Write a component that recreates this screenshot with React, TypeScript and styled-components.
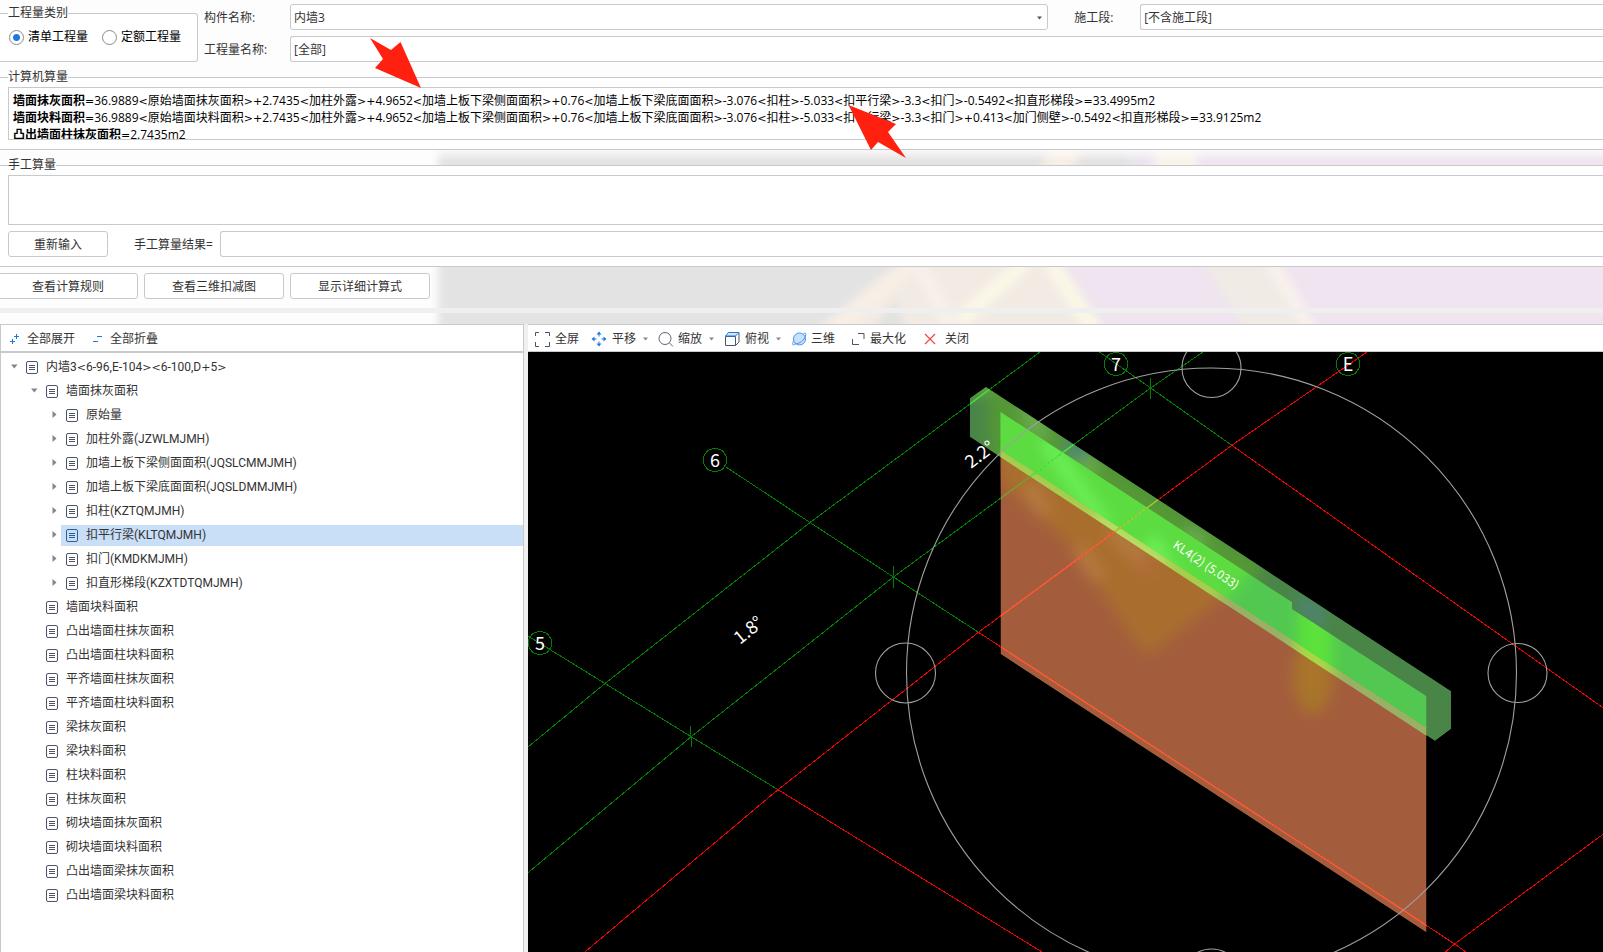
import React, { useState } from "react";
import styled, { createGlobalStyle } from "styled-components";

const LINE = "#c8c9cc";

const GlobalStyle = createGlobalStyle`
  *, *::before, *::after { box-sizing: border-box; }
  html, body { margin: 0; padding: 0; }
  body, button, input, select, textarea {
    font-family: "Open Sans", "Noto Sans CJK SC", sans-serif;
    font-size: 12px;
    line-height: 16px;
    color: #333;
  }
`;

const Page = styled.div`
  position: relative;
  display: flex;
  flex-direction: column;
  min-height: 100vh;
  overflow: hidden;
  background: #fdfdfd;
`;

const Backdrop = styled.svg`
  position: absolute;
  top: 149px;
  left: 0;
  width: 100%;
  height: 206px;
`;

const Content = styled.div`
  position: relative;
  flex: 1;
  display: flex;
  flex-direction: column;
`;

const TopRow = styled.div`
  display: flex;
  gap: 6px;
  height: 62px;
`;

const Group = styled.fieldset<{ $boxed?: boolean }>`
  min-width: 0;
  margin: 0;
  padding: 0 0 9px 8px;
  border: 1px solid ${LINE};
  border-left: 0;
  border-right-width: ${(p) => (p.$boxed ? "1px" : "0")};
  border-radius: ${(p) => (p.$boxed ? "0 3px 3px 0" : "0")};
  background: #fff;
`;

const KindGroup = styled(Group)`
  flex: 0 0 198px;
  margin-top: 5px;
`;

const Legend = styled.legend`
  padding: 0;
  height: 16px;
`;

const RadioRow = styled.div`
  display: flex;
  gap: 14px;
  padding: 8px 0 0 1px;
`;

const RadioLabel = styled.label`
  display: flex;
  align-items: center;
  gap: 4px;
  color: #000;
`;

const Radio = styled.input`
  appearance: none;
  width: 15px;
  height: 15px;
  margin: 0;
  border: 1px solid #8a8a8a;
  border-radius: 50%;
  background: #fff;
  &:checked {
    background: radial-gradient(circle, #1f78e0 0 3px, #fff 4px);
  }
`;

const Fields = styled.div`
  flex: 1;
  display: flex;
  flex-direction: column;
  gap: 6px;
  padding-top: 4px;
`;

const FieldRow = styled.div`
  display: flex;
  align-items: center;
`;

const FieldLabel = styled.label<{ $second?: boolean }>`
  flex: none;
  width: ${(p) => (p.$second ? "66px" : "86px")};
  margin-left: ${(p) => (p.$second ? "26px" : "0")};
  padding-top: 2px;
`;

const SelectBox = styled.div<{ $grow: number; $open?: boolean }>`
  position: relative;
  flex: ${(p) => p.$grow} 1 0;
  min-width: 0;
  height: 26px;
  border: 1px solid ${LINE};
  border-radius: ${(p) => (p.$open ? "3px 0 0 3px" : "3px")};
  border-right-width: ${(p) => (p.$open ? "0" : "1px")};
  background: #fff;
`;

const Select = styled.select`
  appearance: none;
  display: block;
  width: 100%;
  height: 24px;
  padding: 2px 3px 0;
  border: 0;
  background: transparent;
`;

const Caret = styled.svg`
  position: absolute;
  top: 11px;
  right: 5px;
  width: 5px;
  height: 4px;
  pointer-events: none;
`;

const CalcGroup = styled(Group)`
  margin-top: 7px;
`;

const CalcOutput = styled.div`
  height: 53px;
  margin-top: 2px;
  padding: 4px;
  overflow: hidden;
  border: 1px solid ${LINE};
  border-right: 0;
  background: #fff;
  color: #000;
  line-height: 17px;
  white-space: nowrap;
`;

const Operator = styled.span`
  font-family: "DejaVu Sans", sans-serif;
  font-size: 11px;
  line-height: 1;
`;

const ManualGroup = styled(Group)`
  margin-top: 7px;
`;

const ManualInput = styled.textarea`
  display: block;
  width: 100%;
  height: 50px;
  margin: 2px 0 6px;
  border: 1px solid ${LINE};
  border-right: 0;
  border-radius: 0;
  background: #fff;
  resize: none;
`;

const Button = styled.button<{ $wide?: boolean }>`
  flex: none;
  width: ${(p) => (p.$wide ? "140px" : "100px")};
  height: 26px;
  padding: 1px 0 0;
  border: 1px solid ${LINE};
  border-radius: 3px;
  background: #fff;
`;

const ResultLabel = styled.label`
  flex: none;
  width: 86px;
  margin-left: 26px;
  padding-top: 1px;
`;

const ResultInput = styled.input`
  flex: 1;
  min-width: 0;
  height: 26px;
  border: 1px solid ${LINE};
  border-right: 0;
  border-radius: 3px 0 0 3px;
  background: #fff;
`;

const Actions = styled.div`
  display: flex;
  gap: 6px;
  margin-left: -2px;
  padding: 6px 0 9px;
`;

const Splitter = styled.div`
  height: 5px;
  margin-bottom: 11px;
  background: #efefef;
`;

const Main = styled.main`
  flex: 1;
  display: grid;
  grid-template-columns: minmax(0, 524fr) minmax(0, 1075fr);
  gap: 4px;
  background: #f0f0f0;
`;

const Panel = styled.section`
  display: flex;
  flex-direction: column;
  min-width: 0;
`;

const TreePanel = styled(Panel)`
  border: 1px solid ${LINE};
  border-bottom: 0;
  background: #fff;
`;

const ViewPanel = styled(Panel)`
  border-top: 1px solid ${LINE};
  background: #fff;
`;

const Toolbar = styled.div<{ $gap: number; $thick?: boolean }>`
  display: flex;
  align-items: center;
  gap: ${(p) => p.$gap}px;
  height: ${(p) => (p.$thick ? "28px" : "27px")};
  padding-top: 2px;
  padding-left: ${(p) => (p.$thick ? "8px" : "6px")};
  border-bottom: ${(p) => (p.$thick ? "2px" : "1px")} solid ${LINE};
`;

const ToolButton = styled.button`
  display: flex;
  align-items: center;
  gap: 5px;
  height: 24px;
  padding: 0;
  border: 0;
  background: transparent;
  svg { display: block; overflow: visible; }
`;

const Tree = styled.ul`
  margin: 0;
  padding: 2px 0 0 6px;
  list-style: none;
  ul { margin: 0; padding: 0 0 0 20px; list-style: none; }
`;

const TreeRow = styled.div`
  display: flex;
  align-items: center;
  height: 24px;
`;

const Toggle = styled.button`
  display: flex;
  justify-content: center;
  flex: none;
  width: 14px;
  height: 14px;
  padding: 3px 0 0;
  border: 0;
  background: transparent;
`;

const ToggleSpace = styled.span`
  flex: none;
  width: 14px;
`;

const TreeLabel = styled.button<{ $selected: boolean }>`
  flex: 1;
  display: flex;
  align-items: center;
  gap: 8px;
  min-width: 0;
  height: 21px;
  padding: 0 0 0 5px;
  border: 0;
  background: ${(p) => (p.$selected ? "#c9dff8" : "transparent")};
  font-family: Roboto, "Noto Sans CJK SC", sans-serif;
  white-space: nowrap;
`;

const Canvas = styled.div`
  position: relative;
  flex: 1;
  min-height: 600px;
  background: #000;
`;

const Scene = styled.svg`
  position: absolute;
  inset: 0;
  width: 100%;
  height: 100%;
  font-family: "Noto Sans CJK SC", sans-serif;
`;

const Arrows = styled.svg`
  position: absolute;
  top: 36px;
  left: 368px;
  width: 540px;
  height: 124px;
  pointer-events: none;
`;

type Node = { text: string; children?: Node[]; closed?: boolean };

const tree: Node = {
  text: "内墙3<6-96,E-104><6-100,D+5>",
  children: [
    {
      text: "墙面抹灰面积",
      children: [
        "原始量",
        "加柱外露(JZWLMJMH)",
        "加墙上板下梁侧面面积(JQSLCMMJMH)",
        "加墙上板下梁底面面积(JQSLDMMJMH)",
        "扣柱(KZTQMJMH)",
        "扣平行梁(KLTQMJMH)",
        "扣门(KMDKMJMH)",
        "扣直形梯段(KZXTDTQMJMH)",
      ].map((text) => ({ text, closed: true })),
    },
    ...[
      "墙面块料面积",
      "凸出墙面柱抹灰面积",
      "凸出墙面柱块料面积",
      "平齐墙面柱抹灰面积",
      "平齐墙面柱块料面积",
      "梁抹灰面积",
      "梁块料面积",
      "柱块料面积",
      "柱抹灰面积",
      "砌块墙面抹灰面积",
      "砌块墙面块料面积",
      "凸出墙面梁抹灰面积",
      "凸出墙面梁块料面积",
    ].map((text) => ({ text })),
  ],
};

const formulas = [
  {
    name: "墙面抹灰面积",
    body: "=36.9889<原始墙面抹灰面积>+2.7435<加柱外露>+4.9652<加墙上板下梁侧面面积>+0.76<加墙上板下梁底面面积>-3.076<扣柱>-5.033<扣平行梁>-3.3<扣门>-0.5492<扣直形梯段>=33.4995m2",
  },
  {
    name: "墙面块料面积",
    body: "=36.9889<原始墙面块料面积>+2.7435<加柱外露>+4.9652<加墙上板下梁侧面面积>+0.76<加墙上板下梁底面面积>-3.076<扣柱>-5.033<扣平行梁>-3.3<扣门>+0.413<加门侧壁>-0.5492<扣直形梯段>=33.9125m2",
  },
  { name: "凸出墙面柱抹灰面积", body: "=2.7435m2" },
];

const Expression = ({ text }: { text: string }) => (
  <span>
    {text.split(/([<>+=]+)/).map((part, i) =>
      i % 2 ? <Operator key={i}>{part}</Operator> : part
    )}
  </span>
);

const DocIcon = ({ color }: { color: string }) => (
  <svg width="12" height="13" viewBox="0 0 12 13" fill="none" stroke={color} aria-hidden="true">
    <rect x="0.5" y="0.5" width="11" height="12" rx="1.5" />
    <path d="M3 4.5h6M3 6.5h6M3 8.5h6" />
  </svg>
);

const DropCaret = () => (
  <svg width="7" height="4" viewBox="0 0 7 4" aria-hidden="true">
    <path d="M2 0.5h5L4.5 3.5z" fill="#888" />
  </svg>
);

function TreeItem({
  node,
  selected,
  onSelect,
}: {
  node: Node;
  selected: string;
  onSelect: (t: string) => void;
}) {
  const [open, setOpen] = useState(!node.closed);
  const isSelected = node.text === selected;
  const expandable = node.closed || node.children;
  return (
    <li>
      <TreeRow>
        {expandable ? (
          <Toggle aria-label={open ? "折叠" : "展开"} onClick={() => setOpen(!open)}>
            <svg width="8" height="8" viewBox="0 0 8 8" aria-hidden="true">
              <path d={open ? "M1 1.500h6.500L4.250 5.500z" : "M2.500 0v7L6.500 3.500z"} fill="#858585" />
            </svg>
          </Toggle>
        ) : (
          <ToggleSpace />
        )}
        <TreeLabel $selected={isSelected} onClick={() => onSelect(node.text)}>
          <DocIcon color={isSelected ? "#2c5f96" : "#4d5468"} />
          <Expression text={node.text} />
        </TreeLabel>
      </TreeRow>
      {open && node.children && (
        <ul>
          {node.children.map((c) => (
            <TreeItem key={c.text} node={c} selected={selected} onSelect={onSelect} />
          ))}
        </ul>
      )}
    </li>
  );
}

const BlurredBackdrop = () => (
  <Backdrop viewBox="0 149 1603 206" preserveAspectRatio="none" aria-hidden="true">
    <defs>
      <filter id="soft" x="-5%" y="-20%" width="110%" height="140%">
        <feGaussianBlur stdDeviation="4" />
      </filter>
      <linearGradient id="fadeTop" x1="0" y1="0" x2="0" y2="1">
        <stop offset="0" stopColor="#fdfdfd" stopOpacity="0.9" />
        <stop offset="1" stopColor="#fdfdfd" stopOpacity="0" />
      </linearGradient>
    </defs>
    <g filter="url(#soft)">
      <path d="M438 120H1700V400H438z" fill="#e3e3e3" />
      <path d="M1062 120H1700V400H1150L1062 266H1040z" fill="#efe4ef" />
      <path d="M911 262L826 332H1108L1062 262z" fill="#f2ebe4" />
      <path d="M896 300L870 332H906z" fill="#e1e2df" />
      <path d="M1055 130H1085L1072 180H1038z" fill="#f7eee5" />
      <path d="M1085 130H1130V180H1072z" fill="#e3e3e3" />
      <path d="M1132 130H1150V180H1132z" fill="#e9e4f0" />
      <path d="M1160 130H1190L1202 180H1150z" fill="#f8f4ea" />
      <path d="M900 262H926L846 332H814z" fill="#f8eee5" />
      <path d="M918 262L954 332" stroke="#f8f0ea" strokeWidth="14" fill="none" />
      <path d="M1026 262L960 320M1050 262L1096 332" stroke="#fbf7e6" strokeWidth="15" fill="none" />
      <path d="M1204 262H1272L1306 332H1246z" fill="#f0ebe5" />
      <path d="M1272 262L1312 332" stroke="#f9f1ec" strokeWidth="13" fill="none" />
    </g>
    <rect x="0" y="149" width="1603" height="12" fill="url(#fadeTop)" />
  </Backdrop>
);

const bubble = (cx: number, cy: number) =>
  Array.from({ length: 10 }, (_, i) => {
    const a = (i * Math.PI) / 5 + Math.PI / 10;
    return `${(cx + 12 * Math.cos(a)).toFixed(1)},${(cy + 12 * Math.sin(a)).toFixed(1)}`;
  }).join(" ");

const axes = [
  { name: "6", x: 715, y: 460 },
  { name: "5", x: 540, y: 643 },
  { name: "7", x: 1116, y: 364 },
  { name: "E", x: 1348, y: 364 },
];

const BEAM = "M970 398L986 387L1451 691V729L1435 741L970 437z";
const FACE = "M1000.5 412L1292 602V609L1426.500 696V728L1000.500 450z";
const STRIP = "M1000.5 449L1426.500 727V736L1000.500 457z";
const WALL = "M1000.5 449L1426.500 727V932.500L1000.500 654z";

const Model = () => (
  <Scene viewBox="528 352 1075 600" preserveAspectRatio="xMinYMin slice" role="img" aria-label="三维扣减图">
    <defs>
      <filter id="glow" x="-50%" y="-50%" width="200%" height="200%">
        <feGaussianBlur stdDeviation="7" />
      </filter>
      <clipPath id="beam"><path d={BEAM} /></clipPath>
      <clipPath id="face"><path d={FACE} /></clipPath>
      <clipPath id="strip"><path d={STRIP} /></clipPath>
      <clipPath id="wall"><path d={WALL} /></clipPath>
      <clipPath id="solid"><path d={WALL} /><path d={BEAM} /></clipPath>
    </defs>

    <g clipPath="url(#beam)">
      <path d={BEAM} fill="#4a8548" />
      <g filter="url(#glow)">
        <path d="M988 380L1265 565L1240 600L990 460z" fill="#559836" />
        <path d="M970 380H1000L990 395H970z" fill="#62a044" />
        <path d="M1030 400L1040 440M1090 455L1070 500M1200 530L1180 560" stroke="#68ab4b" strokeWidth="22" />
        <path d="M1066 444L1086 456M1300 600L1322 622" stroke="#4f8478" strokeWidth="14" />
      </g>
    </g>

    <g clipPath="url(#wall)">
      <path d={WALL} fill="#a35d3d" />
      <g filter="url(#glow)">
        <path d="M990 430L1235 588L1150 654L1134 640L1070 545L1003 484z" fill="#a96e2e" />
        <ellipse cx="1313" cy="676" rx="20" ry="38" fill="#a8752c" />
        <path d="M1028 484L1046 515M1078 548L1100 580M1112 530L1142 560" stroke="#b67a40" strokeWidth="14" />
        <path d="M1146 560V572" stroke="#b56a3c" strokeWidth="14" />
      </g>
    </g>

    <g clipPath="url(#strip)">
      <path d={STRIP} fill="#99b065" />
      <g filter="url(#glow)">
        <path d="M980 430L1225 585L1215 612L980 480z" fill="#a6cf4e" />
        <path d="M1294 620H1334V710H1294z" fill="#a6d746" />
        <path d="M1095 515L1165 565" stroke="#bce266" strokeWidth="14" />
      </g>
    </g>

    <g clipPath="url(#face)">
      <path d={FACE} fill="#52c850" />
      <g filter="url(#glow)">
        <path d="M980 380L1260 560L1220 610L980 460z" fill="#5bdc40" />
        <path d="M1300 580H1332V720H1296z" fill="#5be23a" />
        <path d="M1045 440L1105 525M1150 540L1180 590M1160 540L1130 580" stroke="#6aee54" strokeWidth="16" />
      </g>
    </g>

    <g fill="none" stroke="#008000" shapeRendering="crispEdges">
      <path d="M1040 352L810 522.5L605 683.5L528 747" />
      <path d="M1203 352L1150.6 388L893.4 577L691.2 736.7L528 872.7" />
      <path d="M726 467L810 522.5L893.4 577L978.5 632.3" />
      <path d="M528 636L605 683.5L691.2 736.7L778 789.7" />
      <path d="M1099.4 352L1150.6 388L1231.8 445.3" />
      <path d="M1150.5 378V399M893 566L894 588M690 726L692 747" />
      {axes.map((a) => (
        <polygon key={a.name} points={bubble(a.x, a.y)} />
      ))}
    </g>
    <g fill="none" stroke="#f00000" shapeRendering="crispEdges">
      <path d="M1367 352L1231.8 445.3L978.5 632.3L778 789.7L584.8 952" />
      <path d="M978.5 632.3L1001 647L1404 910.7L1454.6 944L1466 952" />
      <path d="M778 789.7L1042 952" />
      <path d="M1231.8 445.3L1516.3 646.7L1603 707.7" />
      <path d="M1445.3 952L1454.6 944L1603 834.3" />
    </g>
    <g fill="none" strokeWidth="1.4" clipPath="url(#solid)">
      <path d="M1150.6 388L893.4 577" stroke="#7f9e35" clipPath="url(#wall)" />
      <path d="M1150.6 388L893.4 577" stroke="#52e844" clipPath="url(#beam)" />
      <path d="M1040 352L810 522.5" stroke="#48e83c" />
      <path d="M1231.8 445.3L978.5 632.3" stroke="#ff5c38" clipPath="url(#wall)" />
      <path d="M1231.8 445.3L978.5 632.3" stroke="#8fd83c" clipPath="url(#beam)" />
      <path d="M1001 647L1404 910.7L1454.6 944" stroke="#ff5c38" />
    </g>

    <g fill="none" stroke="#a0a0a0" strokeWidth="1.1">
      <circle cx="1211.5" cy="673" r="305" />
      <circle cx="1211.5" cy="368" r="29.5" />
      <circle cx="905.5" cy="673" r="30" />
      <circle cx="1517.5" cy="673" r="29.5" />
      <circle cx="1211.5" cy="979" r="30" />
    </g>

    <g fill="#fff">
      {axes.map((a) => (
        <text key={a.name} x={a.x} y={a.y + 7} fontSize="18" textAnchor="middle">
          {a.name}
        </text>
      ))}
      <text fontSize="18" transform="translate(971 469) rotate(-37)">2.2°</text>
      <text fontSize="18" transform="translate(740 645) rotate(-39)">1.8°</text>
      <text fontSize="12" transform="translate(1172 547) rotate(34)">KL4(2) (5.033)</text>
    </g>
  </Scene>
);

export default function App() {
  const [selected, setSelected] = useState("扣平行梁(KLTQMJMH)");
  return (
    <>
      <GlobalStyle />
      <Page>
        <BlurredBackdrop />
        <Content>
          <TopRow>
            <KindGroup $boxed>
              <Legend>工程量类别</Legend>
              <RadioRow>
                <RadioLabel>
                  <Radio type="radio" name="kind" defaultChecked />
                  清单工程量
                </RadioLabel>
                <RadioLabel>
                  <Radio type="radio" name="kind" />
                  定额工程量
                </RadioLabel>
              </RadioRow>
            </KindGroup>
            <Fields>
              <FieldRow>
                <FieldLabel htmlFor="component">构件名称:</FieldLabel>
                <SelectBox $grow={758}>
                  <Select id="component">
                    <option>内墙3</option>
                  </Select>
                  <Caret viewBox="0 0 5 4" aria-hidden="true">
                    <path d="M0 0.5h5L2.5 3.5z" fill="#4d5468" />
                  </Caret>
                </SelectBox>
                <FieldLabel $second htmlFor="section">施工段:</FieldLabel>
                <SelectBox $grow={463} $open>
                  <Select id="section">
                    <option>[不含施工段]</option>
                  </Select>
                </SelectBox>
              </FieldRow>
              <FieldRow>
                <FieldLabel htmlFor="quantity">工程量名称:</FieldLabel>
                <SelectBox $grow={1} $open>
                  <Select id="quantity">
                    <option>[全部]</option>
                  </Select>
                </SelectBox>
              </FieldRow>
            </Fields>
          </TopRow>

          <CalcGroup>
            <Legend>计算机算量</Legend>
            <CalcOutput>
              {formulas.map((f) => (
                <div key={f.name}>
                  <b>{f.name}</b>
                  <Expression text={f.body} />
                </div>
              ))}
            </CalcOutput>
          </CalcGroup>

          <ManualGroup>
            <Legend>手工算量</Legend>
            <ManualInput aria-label="手工算量" />
            <FieldRow>
              <Button>重新输入</Button>
              <ResultLabel htmlFor="result">手工算量结果=</ResultLabel>
              <ResultInput id="result" />
            </FieldRow>
          </ManualGroup>

          <Actions>
            <Button $wide>查看计算规则</Button>
            <Button $wide>查看三维扣减图</Button>
            <Button $wide>显示详细计算式</Button>
          </Actions>
          <Splitter />

          <Main>
            <TreePanel>
              <Toolbar $gap={17} $thick>
                <ToolButton>
                  <svg width="13" height="12" viewBox="0 0 13 12" stroke="#1f78e0" aria-hidden="true">
                    <path d="M5 3.5h5M7.5 1v5M1 8.5h5M3.5 6v5" />
                  </svg>
                  全部展开
                </ToolButton>
                <ToolButton>
                  <svg width="13" height="12" viewBox="0 0 13 12" stroke="#1f78e0" aria-hidden="true">
                    <path d="M5 3.5h5M1 8.5h5" />
                  </svg>
                  全部折叠
                </ToolButton>
              </Toolbar>
              <Tree>
                <TreeItem node={tree} selected={selected} onSelect={setSelected} />
              </Tree>
            </TreePanel>

            <ViewPanel>
              <Toolbar $gap={11}>
                <ToolButton>
                  <svg width="16" height="16" viewBox="0 0 16 16" fill="none" stroke="#4d5468" aria-hidden="true">
                    <path d="M1.5 5V1.5H5M11 1.5h4.5V5M15.5 11v4.5H11M5 15.5H1.5V11" />
                  </svg>
                  全屏
                </ToolButton>
                <ToolButton>
                  <svg width="17" height="16" viewBox="0 0 17 16" fill="#1f78e0" aria-hidden="true">
                    <path d="M9 0.500l2.500 3h-5zM9 15.500l2.500-3h-5zM1.500 8l3-2.500v5zM16.500 8l-3-2.500v5z" />
                    <path d="M8.500 3h1v2.500h-1zM8.500 10.500h1v2.500h-1zM4 7.5h2.500v1H4zM11.500 7.5h2.500v1h-2.500z" />
                  </svg>
                  平移
                  <DropCaret />
                </ToolButton>
                <ToolButton>
                  <svg width="14" height="16" viewBox="0 0 14 16" fill="none" stroke="#5d6475" aria-hidden="true">
                    <circle cx="6" cy="7.5" r="6" />
                    <path d="M10.500 12l3.500 3.500" />
                  </svg>
                  缩放
                  <DropCaret />
                </ToolButton>
                <ToolButton>
                  <svg width="15" height="16" viewBox="0 0 15 16" fill="none" stroke="#4d5468" aria-hidden="true">
                    <path d="M0.5 5.5h10v9h-10zM10.5 14.5l3.500-3.500V2" />
                    <path d="M0.5 5L3.500 1.500h10.500L10.500 5z" fill="#d5e6fb" stroke="#1f78e0" />
                  </svg>
                  俯视
                  <DropCaret />
                </ToolButton>
                <ToolButton>
                  <svg width="14" height="15" viewBox="0 0 14 15" fill="none" stroke="#4b93ea" aria-hidden="true">
                    <circle cx="7.500" cy="7" r="6" fill="#c9e0fb" />
                    <path d="M3 12C0.500 14.500 0 12 1.500 9M2.500 12C8 12 12 8 13.500 4C14.500 1.500 13.500 0.500 11.500 1.500" />
                  </svg>
                  三维
                </ToolButton>
                <ToolButton>
                  <svg width="19" height="14" viewBox="0 0 19 14" fill="none" stroke="#4d5468" aria-hidden="true">
                    <path d="M12 1.500h6V7M6.500 7v5.500H13" />
                  </svg>
                  最大化
                </ToolButton>
                <ToolButton>
                  <svg width="23" height="12" viewBox="0 0 23 12" fill="none" stroke="#f04848" strokeWidth="1.2" aria-hidden="true">
                    <path d="M8 1l10 10M18 1L8 11" />
                  </svg>
                  关闭
                </ToolButton>
              </Toolbar>
              <Canvas>
                <Model />
              </Canvas>
            </ViewPanel>
          </Main>
        </Content>
        <Arrows viewBox="368 36 540 124" fill="#ff2010" aria-hidden="true">
          <path d="M370 38L391 50L400.500 42L421 88L375 68L383 59z" />
          <path d="M848.500 105L896 124L888 132L906 158L878 142L871 150z" />
        </Arrows>
      </Page>
    </>
  );
}
